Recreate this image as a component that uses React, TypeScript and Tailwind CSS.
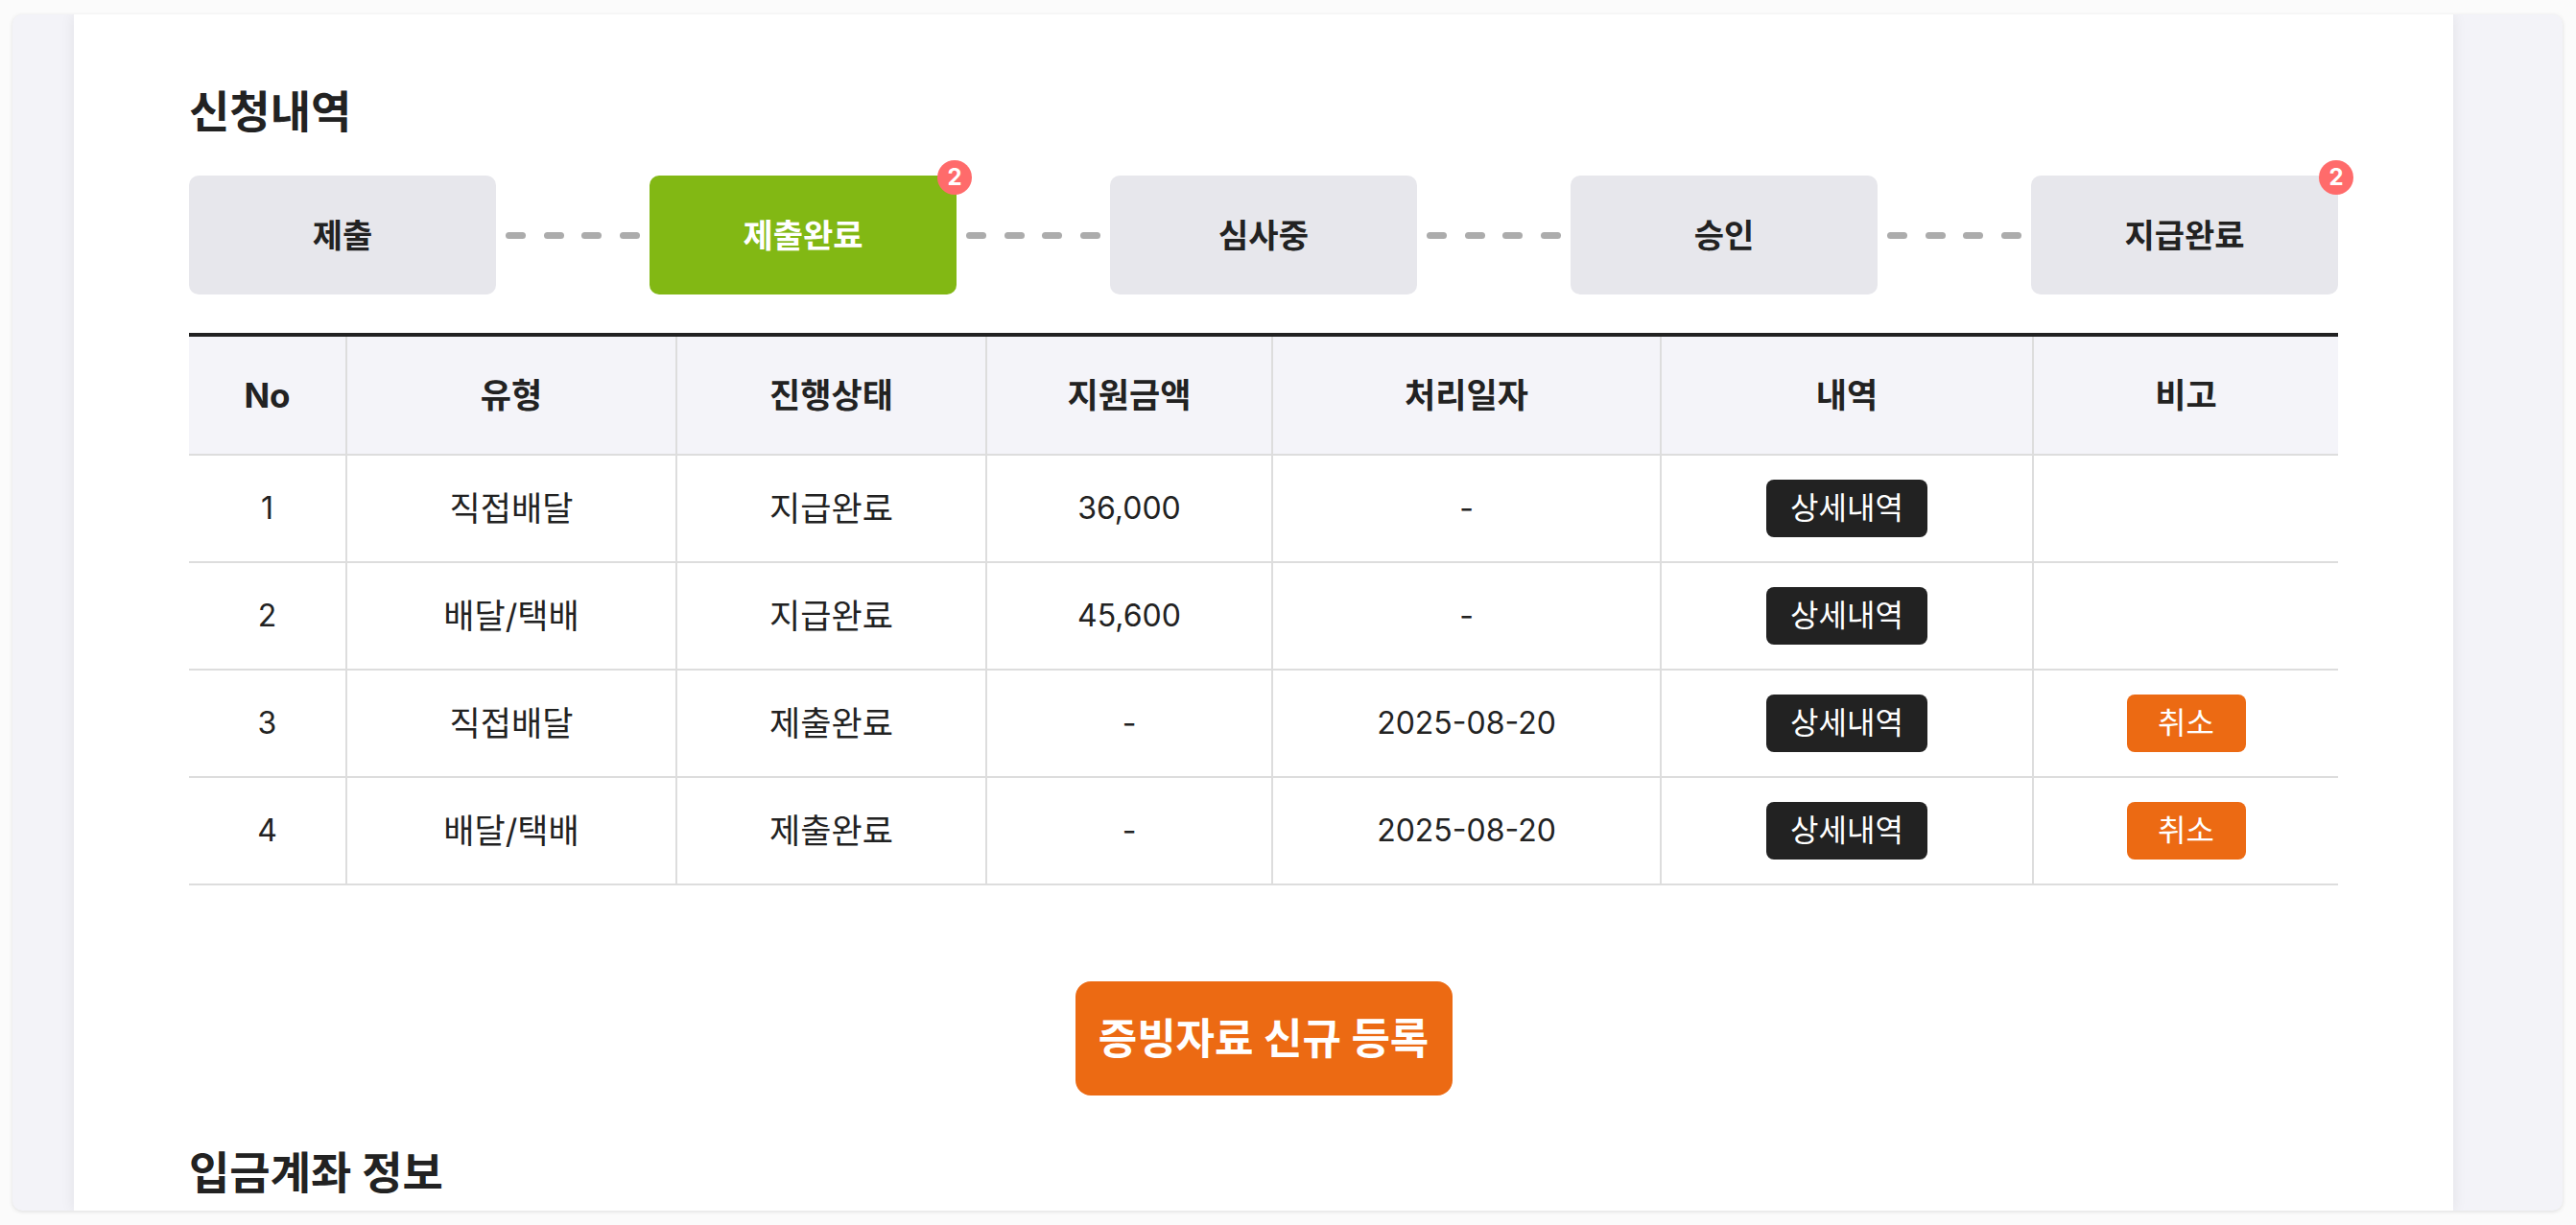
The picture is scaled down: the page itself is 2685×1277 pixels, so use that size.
import React from "react";

type Step = { label: string; active?: boolean; badge?: number };
type Row = { no: number; kind: string; status: string; amount: string; date: string; cancel?: boolean };

const steps: Step[] = [
  { label: "제출" },
  { label: "제출완료", active: true, badge: 2 },
  { label: "심사중" },
  { label: "승인" },
  { label: "지급완료", badge: 2 },
];

const rows: Row[] = [
  { no: 1, kind: "직접배달", status: "지급완료", amount: "36,000", date: "-" },
  { no: 2, kind: "배달/택배", status: "지급완료", amount: "45,600", date: "-" },
  { no: 3, kind: "직접배달", status: "제출완료", amount: "-", date: "2025-08-20", cancel: true },
  { no: 4, kind: "배달/택배", status: "제출완료", amount: "-", date: "2025-08-20", cancel: true },
];

const heads = ["No", "유형", "진행상태", "지원금액", "처리일자", "내역", "비고"];
const cols = "grid grid-cols-[163px_344px_323px_298px_405px_388px_319px]";
const cell = "flex items-center justify-center border-l-2 border-[#dddddd]";

function Dashes() {
  return (
    <div className="flex-1 flex items-center justify-between px-[10px]">
      {[0, 1, 2, 3].map((i) => (
        <span key={i} className="w-[21px] h-[7px] rounded-full bg-[#acacac]" />
      ))}
    </div>
  );
}

function StepBox({ s }: { s: Step }) {
  return (
    <div
      className={
        "relative w-[320px] h-[124px] rounded-[10px] flex items-center justify-center text-[34px] font-bold " +
        (s.active ? "bg-[#82b814] text-white" : "bg-[#e7e7ec] text-[#222]")
      }
    >
      {s.label}
      {s.badge && (
        <span className="absolute -top-4 -right-4 w-9 h-9 rounded-full bg-[#ff6b6b] text-white text-[24px] font-bold flex items-center justify-center leading-none">
          {s.badge}
        </span>
      )}
    </div>
  );
}

export default function App() {
  return (
    <div className="min-h-[1277px] bg-[#fbfbfb] pt-[15px] pl-[13px] pr-[14px] font-['Inter','Noto_Sans_CJK_KR',sans-serif] text-[#222]">
      <div className="h-[1247px] rounded-[10px] overflow-hidden bg-[#f3f3f8] shadow-[0_1px_4px_rgba(0,0,0,0.12)] flex">
        <div className="w-[64px] shrink-0" />
        <main className="relative w-[2480px] shrink-0 bg-white shadow-[0_0_14px_rgba(0,0,0,0.08)] px-[120px] pt-[78px]">
          <h2 className="text-[46px] leading-[46px] font-bold">신청내역</h2>

          <div className="mt-[44px] flex items-center">
            {steps.map((s, i) => (
              <React.Fragment key={s.label}>
                {i > 0 && <Dashes />}
                <StepBox s={s} />
              </React.Fragment>
            ))}
          </div>

          <div className="mt-10 border-t-4 border-[#222]">
            <div className={cols + " h-[124px] bg-[#f4f4f9] border-b-2 border-[#dddddd]"}>
              {heads.map((h, i) => (
                <div
                  key={h}
                  className={
                    "flex items-center justify-center text-[35px] font-bold " +
                    (i > 0 ? "border-l-2 border-[#dddddd]" : "")
                  }
                >
                  {h}
                </div>
              ))}
            </div>
            {rows.map((r) => (
              <div key={r.no} className={cols + " h-[112px] border-b-2 border-[#dddddd] text-[32px]"}>
                <div className="flex items-center justify-center">{r.no}</div>
                <div className={cell + " text-[35px]"}>{r.kind}</div>
                <div className={cell + " text-[35px]"}>{r.status}</div>
                <div className={cell}>{r.amount}</div>
                <div className={cell}>{r.date}</div>
                <div className={cell}>
                  <button className="w-[168px] h-[60px] rounded-[8px] bg-[#222] text-white text-[32px]">
                    상세내역
                  </button>
                </div>
                <div className={cell}>
                  {r.cancel && (
                    <button className="w-[124px] h-[60px] rounded-[8px] bg-[#ec6a13] text-white text-[32px]">
                      취소
                    </button>
                  )}
                </div>
              </div>
            ))}
          </div>

          <div className="mt-[100px] flex justify-center">
            <button className="w-[393px] h-[119px] rounded-[16px] bg-[#ec6a13] text-white text-[44px] font-bold">
              증빙자료 신규 등록
            </button>
          </div>

          <h2 className="mt-[57px] text-[46px] leading-[46px] font-bold">입금계좌 정보</h2>
        </main>
        <div className="flex-1" />
      </div>
    </div>
  );
}
